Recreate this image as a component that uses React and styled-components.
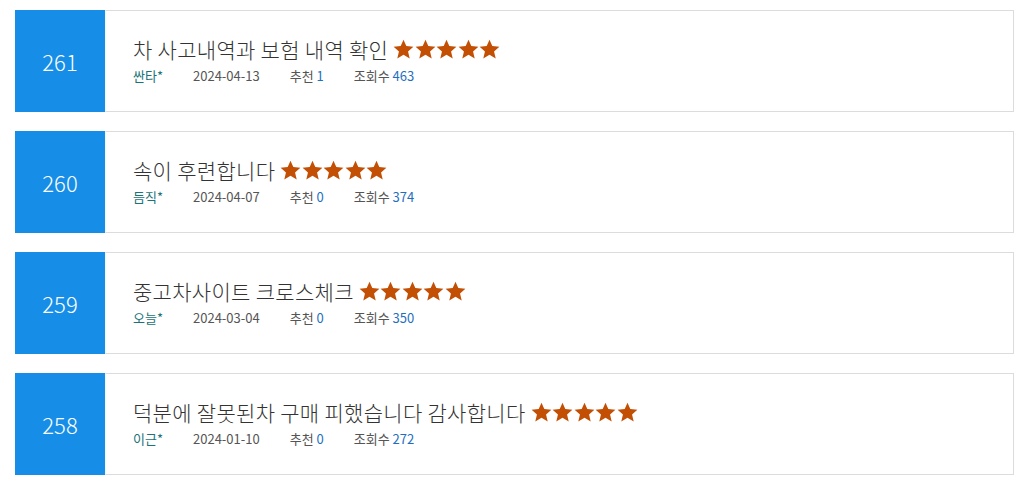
import React from 'react';
import styled, { createGlobalStyle } from 'styled-components';

const GlobalStyle = createGlobalStyle`
  body {
    margin: 0;
    background: #fff;
    font-family: "Noto Sans CJK KR", "Noto Sans", sans-serif;
  }
`;

const List = styled.ul`
  list-style: none;
  margin: 0;
  padding: 10px 15px 0 15px;
  display: flex;
  flex-direction: column;
  gap: 19px;
`;

const Card = styled.li`
  display: flex;
  height: 102px;
`;

const NumberBox = styled.div`
  width: 90px;
  flex-shrink: 0;
  background: #168ee8;
  color: #fff;
  font-size: 22px;
  font-weight: 300;
  display: flex;
  align-items: center;
  justify-content: center;
`;

const Body = styled.div`
  flex: 1;
  border: 1px solid #dcdcdc;
  border-left: 1px solid #f0f6fc;
  padding: 23px 0 0 27px;
  box-sizing: border-box;
`;

const Title = styled.div`
  display: flex;
  align-items: center;
  gap: 5px;
  font-size: 21px;
  font-weight: 300;
  color: #333;
  line-height: 30px;
  letter-spacing: 0.3px;
`;

const Stars = styled.span`
  display: inline-flex;
  gap: 0.5px;
  margin-top: 1px;
`;

const Meta = styled.div`
  display: flex;
  margin-top: 3px;
  font-size: 13px;
  line-height: 18px;
  color: #555;
`;

const MetaItem = styled.span`
  margin-right: 30px;
  color: ${(p) => (p.$author ? '#1a7378' : '#555')};
`;

const Count = styled.span`
  color: #1f6fc0;
`;

const Star = () => (
  <svg width="21" height="21" viewBox="0 0 24 23">
    <path
      d="M12 0.3l3.2 7.3 8.1 0.7-6.1 5.4 1.9 8L12 17.5l-7.1 4.2 1.9-8-6.1-5.4 8.1-0.7z"
      fill="#c24f04"
    />
  </svg>
);

const reviews = [
  { no: 261, title: '차 사고내역과 보험 내역 확인', author: '싼타*', date: '2024-04-13', like: 1, views: 463 },
  { no: 260, title: '속이 후련합니다', author: '듬직*', date: '2024-04-07', like: 0, views: 374 },
  { no: 259, title: '중고차사이트 크로스체크', author: '오늘*', date: '2024-03-04', like: 0, views: 350 },
  { no: 258, title: '덕분에 잘못된차 구매 피했습니다 감사합니다', author: '이근*', date: '2024-01-10', like: 0, views: 272 },
];

export default function App() {
  return (
    <>
      <GlobalStyle />
      <List>
        {reviews.map((r) => (
          <Card key={r.no}>
            <NumberBox>{r.no}</NumberBox>
            <Body>
              <Title>
                {r.title}
                <Stars>
                  {[0, 1, 2, 3, 4].map((i) => <Star key={i} />)}
                </Stars>
              </Title>
              <Meta>
                <MetaItem $author>{r.author}</MetaItem>
                <MetaItem>{r.date}</MetaItem>
                <MetaItem>추천 <Count>{r.like}</Count></MetaItem>
                <MetaItem>조회수 <Count>{r.views}</Count></MetaItem>
              </Meta>
            </Body>
          </Card>
        ))}
      </List>
    </>
  );
}
